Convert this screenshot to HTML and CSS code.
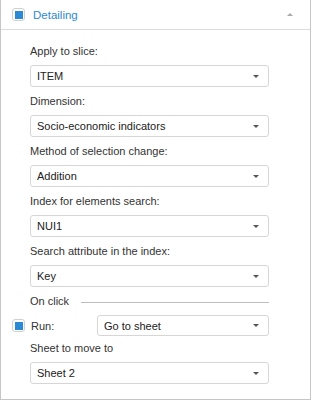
FILE: index.html
```html
<!DOCTYPE html>
<html lang="en">
<head>
    <meta charset="UTF-8">
    <title>Detailing</title>
    <link rel="stylesheet" href="styles.css">
</head>
<body>
    <div class="panel">
        <div class="panel-header">
            <span class="check"><span class="check-mark"></span></span>
            <span class="panel-title">Detailing</span>
            <span class="collapse"></span>
        </div>

        <div class="panel-body">
            <div class="field-label first">Apply to slice:</div>
            <div class="select"><span>ITEM</span><i class="caret"></i></div>

            <div class="field-label">Dimension:</div>
            <div class="select"><span>Socio-economic indicators</span><i class="caret"></i></div>

            <div class="field-label">Method of selection change:</div>
            <div class="select"><span>Addition</span><i class="caret"></i></div>

            <div class="field-label">Index for elements search:</div>
            <div class="select"><span>NUI1</span><i class="caret"></i></div>

            <div class="field-label">Search attribute in the index:</div>
            <div class="select"><span>Key</span><i class="caret"></i></div>

            <div class="group-title"><span>On click</span><span class="group-line"></span></div>

            <div class="run-row">
                <span class="check"><span class="check-mark"></span></span>
                <span class="run-label">Run:</span>
                <div class="select run-select"><span>Go to sheet</span><i class="caret"></i></div>
            </div>

            <div class="field-label sheet-label">Sheet to move to</div>
            <div class="select"><span>Sheet 2</span><i class="caret"></i></div>
        </div>
    </div>
</body>
</html>
```

FILE: styles.css
```css
body {
    margin: 0;
    font-family: "Liberation Sans", Arial, sans-serif;
    font-size: 11px;
    color: #333;
    background: #fff;
}
.panel {
    width: 311px;
    height: 400px;
    box-sizing: border-box;
    border: 1px solid #c6c6c6;
    border-top: none;
}
.panel-header {
    display: flex;
    align-items: center;
    height: 29px;
    border-bottom: 1px solid #dcdcdc;
    padding: 0 0 0 11px;
}
.check {
    width: 13px;
    height: 13px;
    box-sizing: border-box;
    border: 1px solid #d0d0d0;
    border-radius: 3px;
    display: flex;
    align-items: center;
    justify-content: center;
    background: #fff;
}
.check-mark {
    width: 8px;
    height: 8px;
    background: #2a8ad4;
}
.panel-title {
    color: #2f8ad2;
    font-size: 11.5px;
    margin-left: 8px;
    flex: 1;
}
.collapse {
    width: 0;
    height: 0;
    border-left: 3px solid transparent;
    border-right: 3px solid transparent;
    border-bottom: 3px solid #aaa;
    margin-right: 17px;
}
.panel-body {
    padding: 0 41px 0 29px;
}
.field-label {
    line-height: 14px;
    padding: 7px 0 7px 0;
}
.field-label.first {
    padding-top: 14px;
}
.field-label.sheet-label {
    padding-top: 5px;
}
.select {
    display: flex;
    align-items: center;
    height: 22px;
    box-sizing: border-box;
    border: 1px solid #d6d6d6;
    border-radius: 3px;
    padding: 0 9px 0 6px;
    color: #222;
}
.select span {
    flex: 1;
}
.caret {
    width: 0;
    height: 0;
    border-left: 3px solid transparent;
    border-right: 3px solid transparent;
    border-top: 3px solid #555;
}
.group-title {
    display: flex;
    align-items: center;
    line-height: 14px;
    padding: 7px 0;
}
.group-line {
    flex: 1;
    height: 1px;
    background: #bdbdbd;
    margin: 2px 0 0 12px;
}
.run-row {
    display: flex;
    align-items: center;
    margin-left: -18px;
}
.run-label {
    margin-left: 6px;
    width: 66px;
}
.run-select {
    flex: 1;
    height: 21px;
}
```
